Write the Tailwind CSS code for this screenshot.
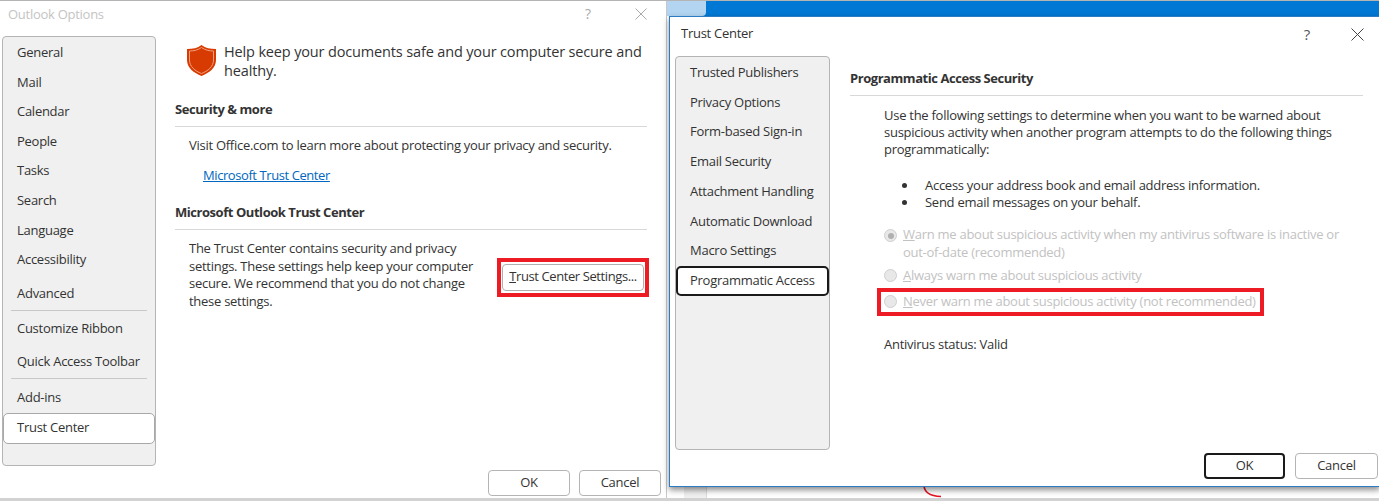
<!DOCTYPE html>
<html><head><meta charset="utf-8"><script src="https://cdn.jsdelivr.net/npm/@tailwindcss/browser@4"></script></head>
<body class="m-0 overflow-hidden">
<div class="relative w-[1379px] h-[501px] bg-[#d2d2d2] overflow-hidden font-['Open_Sans',sans-serif] text-[13px] text-[#333] tracking-[-0.27px]">
  <!-- window behind -->
  <div class="absolute left-[667px] top-[1px] w-[712px] h-[497px] bg-white">
    <div class="h-[15px] bg-[#0078d4] flex"><div class="w-[39px] h-[15px] bg-[#b3d5f2] rounded-br-[4px]"></div></div>
    <div class="absolute left-[17px] top-[480px] w-[23px] h-[17px] bg-[#f0f0f0] border-r border-[#ddd]"></div>
    <svg class="absolute left-[250px] top-[484px]" width="26" height="13" viewBox="0 0 26 13"><path d="M7 0c0 6 4 11 17 11.500" fill="none" stroke="#e81123" stroke-width="1.500"/></svg>
  </div>
  <div class="absolute left-0 top-0 w-full h-[1px] bg-[#b4b4b4]"></div>

  <!-- Outlook Options -->
  <div class="absolute left-0 top-[1px] w-[667px] h-[497px] bg-white border-r border-[#c8c8c8] flex flex-col">
    <div class="h-[35px] flex items-center pl-[8px] pr-[19px] text-[#c4c4c4]">
      <span class="flex-1 pb-[8px]">Outlook Options</span>
      <span class="w-[12px] pb-[10px] text-[14px] text-[#aaa]">?</span>
      <svg class="ml-[38px] mb-[10px]" width="12" height="12" viewBox="0 0 12 12"><path d="M.5.5l11 11M11.5.5l-11 11" stroke="#aaa" stroke-width="1"/></svg>
    </div>
    <div class="flex flex-1">
      <nav class="ml-[2px] w-[154px] shrink-0 h-[430px] bg-[#f0f0f0] border border-[#b4b4b4] rounded-[4px] flex flex-col pt-[1px] whitespace-nowrap">
        <div class="h-[29.6px] pl-[14px] flex items-center">General</div>
        <div class="h-[29.6px] pl-[14px] flex items-center">Mail</div>
        <div class="h-[29.6px] pl-[14px] flex items-center">Calendar</div>
        <div class="h-[29.6px] pl-[14px] flex items-center">People</div>
        <div class="h-[29.6px] pl-[14px] flex items-center">Tasks</div>
        <div class="h-[29.6px] pl-[14px] flex items-center">Search</div>
        <div class="h-[29.6px] pl-[14px] flex items-center">Language</div>
        <div class="h-[29.6px] pl-[14px] flex items-center">Accessibility</div>
        <div class="h-[36px] shrink-0 mx-[8px] pl-[6px] pt-[3px] flex items-center border-b border-[#c8c8c8]">Advanced</div>
        <div class="h-[33px] shrink-0 mx-[8px] pl-[6px] pt-[3px] flex items-center">Customize Ribbon</div>
        <div class="h-[35px] shrink-0 mx-[8px] pl-[6px] pt-[2px] flex items-center border-b border-[#c8c8c8]">Quick Access Toolbar</div>
        <div class="h-[36px] shrink-0 pl-[14px] pt-[2px] flex items-center">Add-ins</div>
        <div class="h-[31px] shrink-0 pl-[13px] pb-[1px] mt-[-2px] flex items-center bg-white border border-[#a8a8a8] rounded-[5px]">Trust Center</div>
      </nav>
      <main class="flex-1 min-w-0 pl-[19px] pr-[19px] relative">
        <div class="flex pl-[11px] pt-[5px] gap-[7px]">
          <svg class="mt-[3px] shrink-0" width="31" height="33" viewBox="0 0 31 33"><path d="M15.500 1C19.500 4 24 5 30 5V16C30 24 23 29 15.500 32C8 29 1 24 1 16V5C7 5 11.500 4 15.500 1Z" fill="#d83b01"/><path d="M15.500 3.500C19 6 23 7 27.500 7V16C27.500 22.500 22 27 15.500 29.500C9 27 3.500 22.500 3.500 16V7C8 7 12 6 15.500 3.500Z" fill="none" stroke="#f0a080" stroke-width="1"/></svg>
          <p class="text-[14.5px] leading-[19px] mt-[1px] w-[428px] tracking-[-0.15px]">Help keep your documents safe and your computer secure and healthy.</p>
        </div>
        <h2 class="mt-[21px] font-bold h-[26px] border-b border-[#d8d8d8] leading-[16px] tracking-[-0.45px]">Security &amp; more</h2>
        <p class="mt-[9px] pl-[14px] leading-[18px]">Visit Office.com to learn more about protecting your privacy and security.</p>
        <a class="block mt-[12px] ml-[28px] text-[#0067c0] underline leading-[18px] tracking-[-0.42px]">Microsoft Trust Center</a>
        <h2 class="mt-[20px] font-bold h-[26px] border-b border-[#d8d8d8] leading-[16px] tracking-[-0.45px]">Microsoft Outlook Trust Center</h2>
        <div class="flex items-center pl-[14px] pt-[10px]">
          <p class="w-[288px] shrink-0 leading-[17.500px]">The Trust Center contains security and privacy settings. These settings help keep your computer secure. We recommend that you do not change these settings.</p>
          <div class="ml-[20px] mt-[4px] shrink-0 border-[4px] border-[#ed1c24] px-[1px] py-[2px] bg-white">
            <button class="w-[142px] h-[27px] block border border-[#b0b0b0] rounded-[4px] bg-white text-[#333] tracking-[-0.4px]"><u>T</u>rust Center Settings...</button>
          </div>
        </div>
        <div class="absolute right-[5px] bottom-[2px] flex gap-[9px]">
          <button class="w-[82px] h-[26px] border border-[#b4b4b4] rounded-[4px] bg-white">OK</button>
          <button class="w-[82px] h-[26px] border border-[#b4b4b4] rounded-[4px] bg-white">Cancel</button>
        </div>
      </main>
    </div>
  </div>

  <!-- Trust Center dialog -->
  <div class="absolute left-[669px] top-[16px] w-[711px] h-[471px] bg-white border border-[#2b7cc4] flex flex-col shadow-[0_3px_6px_rgba(0,0,0,0.45)]">
    <div class="h-[39px] flex items-center pl-[11px] pr-[15px]">
      <span class="flex-1 pb-[5px]">Trust Center</span>
      <span class="pb-[5px] text-[15px] text-[#555]">?</span>
      <svg class="ml-[41px] mb-[5px]" width="13" height="13" viewBox="0 0 13 13"><path d="M.5.5l12 12M12.500.5l-12 12" stroke="#444" stroke-width="1"/></svg>
    </div>
    <div class="flex flex-1 min-w-0">
      <nav class="ml-[5px] w-[155px] shrink-0 h-[394px] bg-[#f0f0f0] border border-[#b4b4b4] rounded-[4px] flex flex-col pt-[1px] whitespace-nowrap">
        <div class="h-[29.7px] pl-[14px] flex items-center">Trusted Publishers</div>
        <div class="h-[29.7px] pl-[14px] flex items-center">Privacy Options</div>
        <div class="h-[29.7px] pl-[14px] flex items-center">Form-based Sign-in</div>
        <div class="h-[29.7px] pl-[14px] flex items-center">Email Security</div>
        <div class="h-[29.7px] pl-[14px] flex items-center">Attachment Handling</div>
        <div class="h-[29.7px] pl-[14px] flex items-center">Automatic Download</div>
        <div class="h-[29.7px] pl-[14px] flex items-center">Macro Settings</div>
        <div class="h-[30px] shrink-0 pl-[12px] flex items-center bg-white border-2 border-[#1a1a1a] rounded-[5px]">Programmatic Access</div>
      </nav>
      <main class="flex-1 min-w-0 pl-[20px] pr-[16px] relative">
        <h2 class="pt-[14px] h-[40px] font-bold border-b border-[#d8d8d8] leading-[16px] tracking-[-0.45px]">Programmatic Access Security</h2>
        <div class="pl-[34px]">
          <p class="mt-[11px] leading-[17px] w-[470px]">Use the following settings to determine when you want to be warned about suspicious activity when another program attempts to do the following things programmatically:</p>
          <ul class="mt-[19px] pl-[41px] leading-[17px] list-disc marker:text-[#333]">
            <li class="ml-[-7px] pl-[7px]">Access your address book and email address information.</li>
            <li class="ml-[-7px] pl-[7px]">Send email messages on your behalf.</li>
          </ul>
          <div class="mt-[15px] text-[#c2c2c2] flex flex-col">
            <div class="flex gap-[6px] leading-[17.500px] h-[35px]">
              <span class="mt-[3px] ml-0 w-[13px] h-[13px] shrink-0 rounded-full border border-[#cfcfcf] bg-[#e8e8e8] flex items-center justify-center"><span class="w-[6px] h-[6px] rounded-full bg-[#b0b0b0]"></span></span>
              <span class="w-[445px]"><u>W</u>arn me about suspicious activity when my antivirus software is inactive or out-of-date (recommended)</span>
            </div>
            <div class="flex gap-[6px] leading-[17px] mt-[6px]">
              <span class="mt-[2px] w-[13px] h-[13px] shrink-0 rounded-full border border-[#cfcfcf] bg-[#e8e8e8]"></span>
              <span><u>A</u>lways warn me about suspicious activity</span>
            </div>
            <div class="-ml-[7px] mt-[4px] w-[387px] h-[28px] border-[4px] border-[#ed1c24] pl-[3px] pb-[2px] flex items-center gap-[6px] leading-[17px]">
              <span class="w-[13px] h-[13px] shrink-0 rounded-full border border-[#cfcfcf] bg-[#e8e8e8]"></span>
              <span><u>N</u>ever warn me about suspicious activity (not recommended)</span>
            </div>
          </div>
          <p class="mt-[20px] leading-[17px]">Antivirus status: Valid</p>
        </div>
        <div class="absolute right-[1px] bottom-[7px] flex gap-[10px]">
          <button class="w-[81px] h-[26px] border-2 border-[#1a1a1a] rounded-[4px] bg-white">OK</button>
          <button class="w-[83px] h-[26px] border border-[#b4b4b4] rounded-[4px] bg-white">Cancel</button>
        </div>
      </main>
    </div>
  </div>
</div>
</body></html>
